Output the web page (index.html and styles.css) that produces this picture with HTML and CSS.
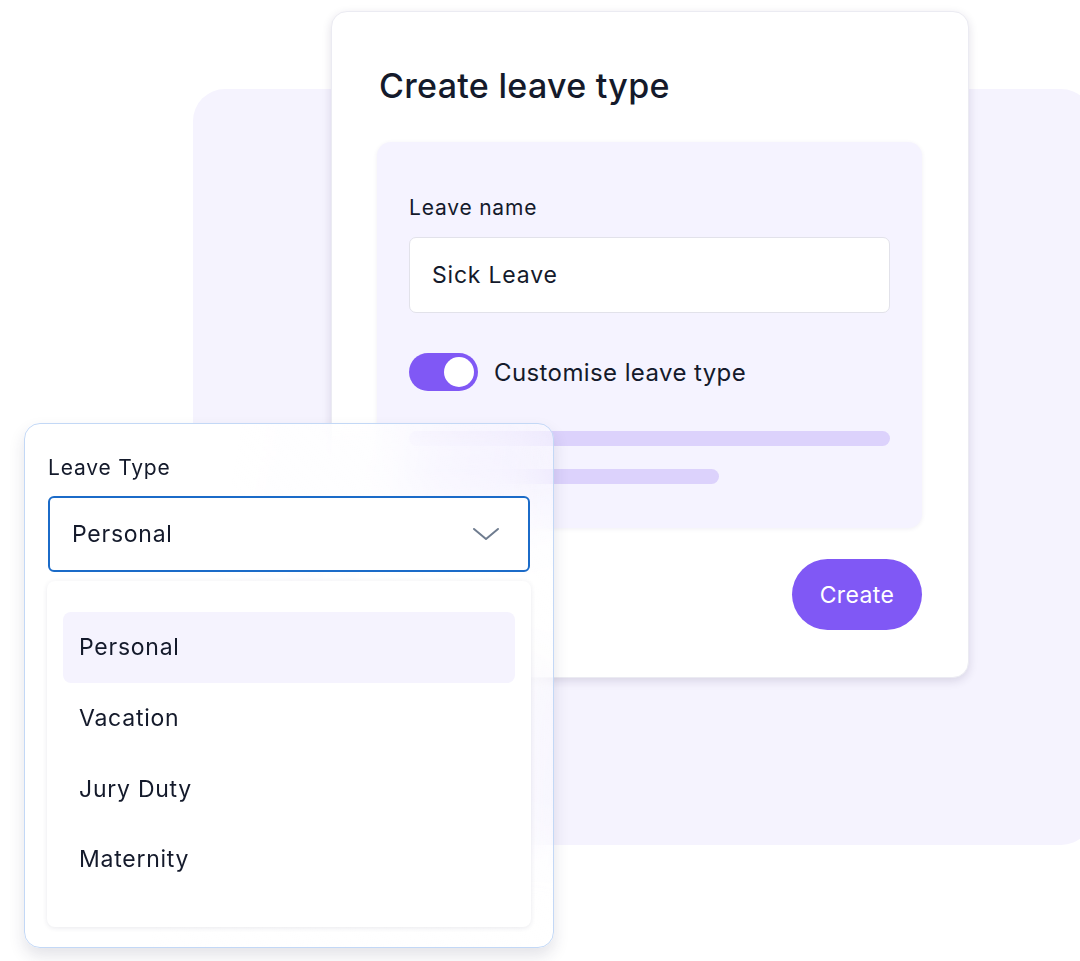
FILE: index.html
```html
<!DOCTYPE html>
<html lang="en">
<head>
    <meta charset="UTF-8">
    <title>Create leave type</title>
    <meta name="viewport" content="width=device-width, initial-scale=1">
    <link rel="stylesheet" href="styles.css">
</head>
<body>
    <div class="stage">
        <div class="backdrop"></div>

        <div class="card">
            <h2 class="card-title">Create leave type</h2>
            <div class="panel">
                <label class="field-label">Leave name</label>
                <div class="text-input">Sick Leave</div>
                <div class="toggle-row">
                    <span class="toggle"><span class="knob"></span></span>
                    <span class="toggle-label">Customise leave type</span>
                </div>
                <div class="skeleton long"></div>
                <div class="skeleton short"></div>
            </div>
            <div class="actions">
                <button class="btn-create">Create</button>
            </div>
        </div>

        <div class="dropdown">
            <label class="field-label">Leave Type</label>
            <div class="select">
                <span>Personal</span>
                <svg width="28" height="16" viewBox="0 0 28 16" fill="none">
                    <path d="M2 3 L14 13 L26 3" stroke="#6f7c8f" stroke-width="2" stroke-linecap="round" stroke-linejoin="round"/>
                </svg>
            </div>
            <ul class="options">
                <li class="active">Personal</li>
                <li>Vacation</li>
                <li>Jury Duty</li>
                <li>Maternity</li>
            </ul>
        </div>
    </div>
</body>
</html>
```

FILE: styles.css
```css
body { margin: 0; background: #fff; font-family: Inter, "Noto Sans", sans-serif; color: #141a2b; }
.stage { position: relative; width: 1080px; height: 961px; overflow: hidden; }

.backdrop { position: absolute; left: 193px; top: 89px; width: 900px; height: 756px; background: #f5f3fe; border-radius: 32px; }

.card { position: absolute; left: 331px; top: 11px; width: 638px; height: 667px; box-sizing: border-box; background: #fff; border: 1px solid #ebebf2; border-radius: 16px; box-shadow: 0 3px 10px rgba(40, 30, 80, 0.14); padding: 53px 46px 0 45px; }
.card-title { margin: 0 0 36px 2px; font-size: 34px; line-height: 41px; font-weight: 500; letter-spacing: 0.3px; }

.panel { background: #f5f3ff; border-radius: 14px; padding: 54px 32px 44px 32px; display: flex; flex-direction: column; box-shadow: 0 1px 4px rgba(60, 50, 120, 0.08); }
.field-label { display: block; font-size: 21px; line-height: 24px; letter-spacing: 0.8px; }
.text-input { margin-top: 17px; height: 76px; box-sizing: border-box; background: #fff; border: 1.5px solid #e2e2ea; border-radius: 7px; padding: 0 22px; display: flex; align-items: center; font-size: 23px; letter-spacing: 0.8px; }

.toggle-row { display: flex; align-items: center; gap: 16px; margin-top: 40px; height: 38px; }
.toggle { width: 69px; height: 38px; border-radius: 19px; background: #8058f5; position: relative; flex: none; }
.knob { position: absolute; right: 4px; top: 4px; width: 30px; height: 30px; border-radius: 50%; background: #fff; }
.toggle-label { font-size: 24px; letter-spacing: 0.4px; }

.skeleton { height: 15px; border-radius: 8px; background: #dcd2fc; }
.skeleton.long { margin-top: 40px; }
.skeleton.short { margin-top: 23px; width: 310px; }

.actions { display: flex; justify-content: flex-end; margin-top: 31px; }
.btn-create { width: 130px; height: 71px; border: none; border-radius: 36px; background: #8058f5; color: #fff; font-family: inherit; font-size: 23px; letter-spacing: 0.4px; }

.dropdown { position: absolute; left: 24px; top: 423px; width: 530px; height: 525px; box-sizing: border-box; border: 1.5px solid #c3d8f6; border-radius: 16px; padding: 32px 23px 0 23px; background: linear-gradient(100deg, rgba(255,255,255,0.97) 35%, rgba(255,255,255,0.3)); backdrop-filter: blur(28px); box-shadow: 0 8px 16px rgba(40, 40, 80, 0.13); }
.select { margin-top: 16px; height: 76px; box-sizing: border-box; border: 2px solid #1b6bc8; border-radius: 6px; background: #fff; display: flex; align-items: center; justify-content: space-between; padding: 0 28px 0 22px; font-size: 23px; letter-spacing: 0.75px; }
.options { list-style: none; margin: 9px -1px 0 -1px; padding: 31px 16px 32px 16px; background: #fff; border-radius: 8px; box-shadow: 0 1px 5px rgba(40, 40, 80, 0.1); }
.options li { height: 70.7px; display: flex; align-items: center; padding-left: 16px; font-size: 23px; letter-spacing: 0.75px; border-radius: 8px; }
.options li.active { background: #f5f3fe; }
```
